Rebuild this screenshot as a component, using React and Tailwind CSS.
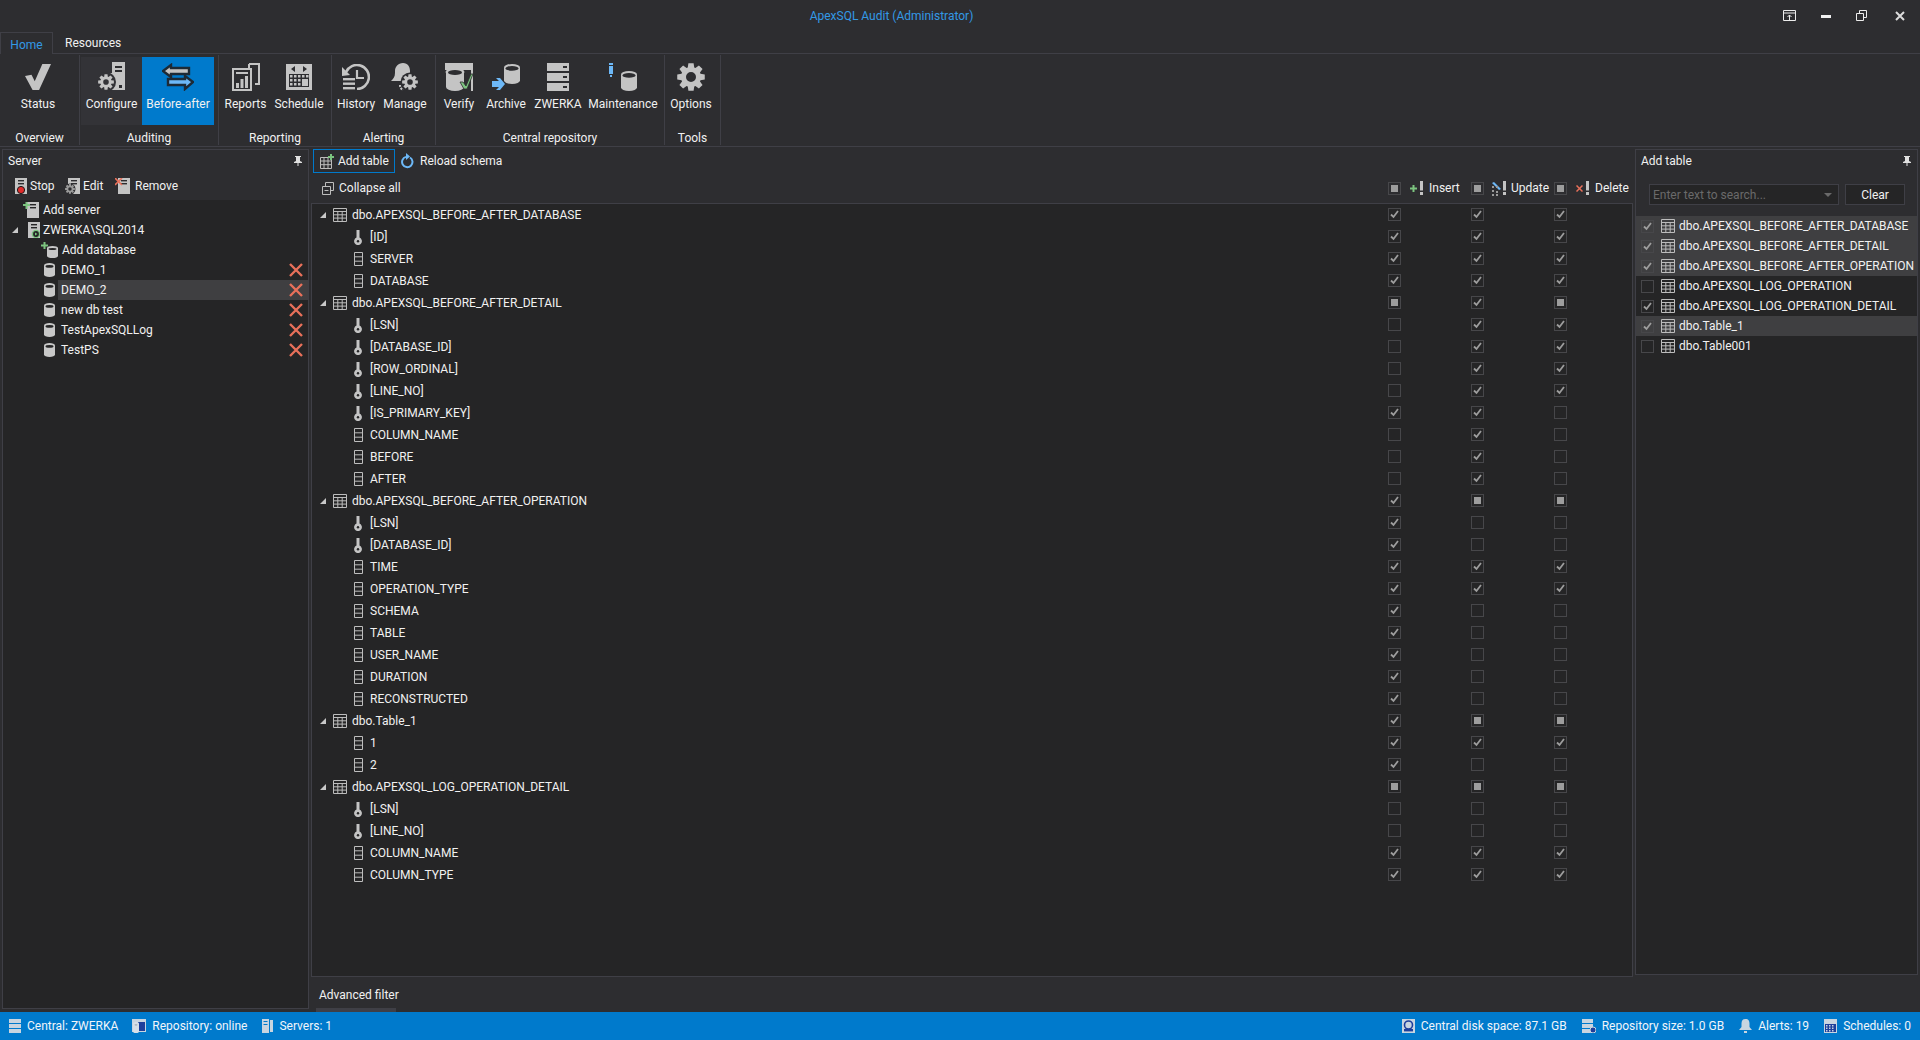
const G = "#c4c4c4";
const BLUE = "#6db8f7";
const GREEN = "#7cc47f";
const RED = "#e8705a";

function gearPath(c, ro, ri, hole, teeth = 8) {
  const pts = [];
  const step = (Math.PI * 2) / teeth;
  for (let i = 0; i < teeth; i++) {
    const a = i * step;
    [[-0.3, ri], [-0.17, ro], [0.17, ro], [0.3, ri]].forEach(([f, r]) => {
      pts.push(`${(c + r * Math.cos(a + f * step * 1.4)).toFixed(2)} ${(c + r * Math.sin(a + f * step * 1.4)).toFixed(2)}`);
    });
  }
  return `M${pts.join("L")}Z M${c - hole} ${c}a${hole} ${hole} 0 1 0 ${hole * 2} 0a${hole} ${hole} 0 1 0 ${-hole * 2} 0Z`;
}

function Gear({ size = 28, color = G }) {
  return (
    <svg width={size} height={size} viewBox="0 0 28 28">
      <path d={gearPath(14, 14, 10, 5)} fill={color} fillRule="evenodd" />
    </svg>
  );
}

function Cylinder({ x = 0, y = 0, w = 16, h = 20, fill = G, top = "#2d2d30" }) {
  const ry = h * 0.17;
  return (
    <g>
      <path d={`M${x} ${y + ry}a${w / 2} ${ry} 0 0 1 ${w} 0v${h - ry * 2}a${w / 2} ${ry} 0 0 1 ${-w} 0z`} fill={fill} />
      <ellipse cx={x + w / 2} cy={y + ry + 1} rx={w / 2 - 1.5} ry={ry - 1} fill={top} />
    </g>
  );
}

const Gear16 = ({ color = G }) => <path d={gearPath(8, 8, 5.6, 2.8)} fill={color} fillRule="evenodd" />;

/* ribbon icons */
const StatusIcon = () => (
  <svg width="26" height="26" viewBox="0 0 24 24"><path d="M0 11l6-1 3 6L16 0h8L13 24H7z" fill={G} /></svg>
);
const ConfigureIcon = () => (
  <svg width="30" height="30" viewBox="0 0 30 30">
    <path d="M15 0h13v28H11V11h4z" fill={G} />
    <rect x="18" y="4" width="7" height="2" fill="#2d2d30" /><rect x="18" y="8" width="7" height="2" fill="#2d2d30" />
    <rect x="22" y="23" width="3" height="3" fill="#2d2d30" />
    <circle cx="9" cy="20" r="10" fill="#333337" />
    <g transform="translate(1 12)"><Gear16 /></g>
  </svg>
);
const BeforeAfterIcon = () => (
  <svg width="32" height="28" viewBox="0 0 32 28">
    <path d="M9 2L1 8l8 6v-3h18V5H9z" fill="#c4c4c4" stroke="#1d2a36" strokeWidth="2.4" />
    <path d="M23 13l8 6-8 7v-4H6v-6h17z" fill={BLUE} stroke="#1d2a36" strokeWidth="2.4" />
  </svg>
);
const ReportsIcon = () => (
  <svg width="28" height="28" viewBox="0 0 28 28">
    <path d="M17 1h10v20h-4M17 1v4" fill="none" stroke={G} strokeWidth="2" />
    <rect x="1" y="6" width="18" height="21" fill="none" stroke={G} strokeWidth="2" />
    <rect x="4" y="9" width="12" height="2" fill={G} />
    <rect x="4" y="20" width="3" height="5" fill={G} /><rect x="8.5" y="16" width="3" height="9" fill={G} /><rect x="13" y="13" width="3" height="12" fill={G} />
  </svg>
);
const ScheduleIcon = () => (
  <svg width="26" height="26" viewBox="0 0 26 26">
    <rect width="26" height="26" fill={G} />
    <path d="M9 2v6L5 5zM17 2v6l4-3z" fill="#2d2d30" />
    <rect x="3" y="10" width="20" height="13" fill="#2d2d30" />
    {[11, 15, 19].map((y) => [4, 8, 12].map((x) => <rect key={x + "" + y} x={x} y={y} width="2.5" height="2.5" fill={G} />))}
    <rect x="16" y="15" width="6" height="7" fill={G} /><rect x="16" y="11" width="2.5" height="2.5" fill={G} /><rect x="20" y="11" width="2.5" height="2.5" fill={G} />
  </svg>
);
const HistoryIcon = () => (
  <svg width="28" height="26" viewBox="0 0 28 26">
    <path d="M4 8a12 12 0 1 1 11 17" fill="none" stroke={G} strokeWidth="2.6" />
    <path d="M0 3l8 8-8 1z" fill={G} />
    <path d="M15 6v8h7" fill="none" stroke={G} strokeWidth="2.2" />
    <rect x="1" y="14" width="12" height="2.4" fill={G} /><rect x="1" y="18.5" width="12" height="2.4" fill={G} /><rect x="1" y="23" width="12" height="2.4" fill={G} />
  </svg>
);
const ManageIcon = () => (
  <svg width="28" height="28" viewBox="0 0 28 28">
    <path d="M12 0c5 0 7 4 7 8v6l3 4H0c2-2 4-4 4-8V8c0-4 3-8 8-8z" fill={G} />
    <circle cx="19" cy="19" r="9.5" fill="#2d2d30" />
    <g transform="translate(11 11)"><Gear16 /></g>
    <path d="M9 22a8 6 0 0 0 3 5" fill="none" stroke={G} strokeWidth="2" strokeDasharray="2 1" />
  </svg>
);
const VerifyIcon = () => (
  <svg width="28" height="28" viewBox="0 0 28 28">
    <path d="M0 0h28v28h-2V7H0z" fill={G} />
    <path d="M1 8v16a9 4 0 0 0 18 0V8" fill={G} /><ellipse cx="10" cy="9" rx="9.5" ry="4" fill={G} />
    <ellipse cx="10" cy="9.5" rx="7" ry="2.6" fill="#2d2d30" />
    <path d="M15 19l3 0 3 4 5-12 2 0-6 15h-3z" fill={GREEN} stroke="#2d2d30" strokeWidth="0.8" />
  </svg>
);
const ArchiveIcon = () => (
  <svg width="29" height="27" viewBox="0 0 29 27">
    <Cylinder x={12} y={0} w={16} h={20} />
    <path d="M0 17h7l-3-3h4l5 6-5 6H4l3-3H0z" fill={BLUE} />
  </svg>
);
const ZwerkaIcon = () => (
  <svg width="22" height="28" viewBox="0 0 22 28">
    {[0, 10, 20].map((y) => (
      <g key={y}><rect y={y} width="22" height="8" fill={G} /><rect x="16" y={y + 3} width="4" height="2" fill="#2d2d30" /></g>
    ))}
  </svg>
);
const MaintenanceIcon = () => (
  <svg width="28" height="28" viewBox="0 0 28 28">
    <rect x="0" y="0" width="4" height="2" fill={BLUE} /><path d="M0 3h4v8H0zM1 12h2v2H1z" fill={BLUE} />
    <Cylinder x={12} y={8} w={16} h={20} />
  </svg>
);

/* small icons */
const ServerSmall = ({ children, w = 14, bg = "#2d2d30" }) => (
  <svg width={w} height="16" viewBox={`0 0 ${w} 16`} className="shrink-0">
    <path d={`M${w - 12} 0h12v16h-12z`} fill={G} />
    <rect x={w - 9} y="2" width="6" height="1.4" fill={bg} /><rect x={w - 9} y="5" width="6" height="1.4" fill={bg} />
    {children}
  </svg>
);
const DbIcon = () => (
  <svg width="11" height="14" viewBox="0 0 11 14" className="shrink-0"><Cylinder x={0} y={0} w={11} h={14} fill="#c8c8c8" top="#252526" /></svg>
);
const RedX = () => (
  <svg width="14" height="14" viewBox="0 0 14 14" className="shrink-0"><path d="M1 1l12 12M13 1L1 13" stroke={RED} strokeWidth="2.4" /></svg>
);
const Tri = () => (
  <svg width="6" height="6" viewBox="0 0 6 6" className="shrink-0"><path d="M6 0v6H0z" fill="#c8c8c8" /></svg>
);
const TableIcon = () => (
  <svg width="14" height="14" viewBox="0 0 14 14" className="shrink-0">
    <path d="M.5.5h13v13H.5zM.5 3.5h13M.5 6.8h13M.5 10.1h13M4.8 3.5v10M9.2 3.5v10" fill="none" stroke="#bdbdbd" />
  </svg>
);
const KeyIcon = () => (
  <svg width="8" height="15" viewBox="0 0 8 15" className="shrink-0">
    <path d="M2.500 0h3v7.600a3.900 3.900 0 1 1-3 0z" fill="#c4c4c4" /><circle cx="4" cy="11.2" r="1.2" fill="#252526" />
  </svg>
);
const ColumnIcon = () => (
  <svg width="9" height="14" viewBox="0 0 9 14" className="shrink-0"><path d="M.5.5h8v13h-8zM.5 4.800h8M.5 9.200h8" fill="none" stroke="#bdbdbd" /></svg>
);
const Bang = () => (
  <svg width="3" height="14" viewBox="0 0 3 14" className="shrink-0"><path d="M0 0h3v9.500H0zM0 11h3v3H0z" fill={G} /></svg>
);
const Pin = () => (
  <svg width="8" height="10" viewBox="0 0 8 10" className="shrink-0"><path d="M1 0h6v1H6v4l2 1v1H4.500v3h-1V7H0V6l2-1V1H1z" fill="#e0e0e0" /></svg>
);

function Checkbox({ state }) {
  return (
    <span className="w-[13px] h-[13px] border border-[#47474a] flex items-center justify-center shrink-0">
      {state === "c" && (
        <svg width="11" height="11" viewBox="0 0 11 11"><path d="M2 5.500l2.500 2.500L9 2" fill="none" stroke="#9d9d9d" strokeWidth="1.8" /></svg>
      )}
      {state === "i" && <span className="w-[7px] h-[7px] bg-[#9d9d9d]" />}
    </span>
  );
}

function RibbonBtn({ label, w, icon, cls = "" }) {
  return (
    <div className={`h-[68px] flex flex-col items-center pt-[5px] ${w} ${cls}`}>
      <div className="h-[30px] flex items-center justify-center">{icon}</div>
      <span className="mt-[4px] leading-4 whitespace-nowrap">{label}</span>
    </div>
  );
}

function RibbonGroup({ label, w, children }) {
  return (
    <div className={`h-[90px] border-r border-[#3f3f46] flex flex-col ${w}`}>
      <div className="h-[68px] mt-[2px] flex">{children}</div>
      <div className="mt-[4px] h-4 leading-4 text-center pt-px">{label}</div>
    </div>
  );
}

const columns = [
  ["t", "dbo.APEXSQL_BEFORE_AFTER_DATABASE", "ccc"],
  ["k", "[ID]", "ccc"],
  ["c", "SERVER", "ccc"],
  ["c", "DATABASE", "ccc"],
  ["t", "dbo.APEXSQL_BEFORE_AFTER_DETAIL", "ici"],
  ["k", "[LSN]", "ecc"],
  ["k", "[DATABASE_ID]", "ecc"],
  ["k", "[ROW_ORDINAL]", "ecc"],
  ["k", "[LINE_NO]", "ecc"],
  ["k", "[IS_PRIMARY_KEY]", "cce"],
  ["c", "COLUMN_NAME", "ece"],
  ["c", "BEFORE", "ece"],
  ["c", "AFTER", "ece"],
  ["t", "dbo.APEXSQL_BEFORE_AFTER_OPERATION", "cii"],
  ["k", "[LSN]", "cee"],
  ["k", "[DATABASE_ID]", "cee"],
  ["c", "TIME", "ccc"],
  ["c", "OPERATION_TYPE", "ccc"],
  ["c", "SCHEMA", "cee"],
  ["c", "TABLE", "cee"],
  ["c", "USER_NAME", "cee"],
  ["c", "DURATION", "cee"],
  ["c", "RECONSTRUCTED", "cee"],
  ["t", "dbo.Table_1", "cii"],
  ["c", "1", "ccc"],
  ["c", "2", "cee"],
  ["t", "dbo.APEXSQL_LOG_OPERATION_DETAIL", "iii"],
  ["k", "[LSN]", "eee"],
  ["k", "[LINE_NO]", "eee"],
  ["c", "COLUMN_NAME", "ccc"],
  ["c", "COLUMN_TYPE", "ccc"],
];

const tables = [
  ["dbo.APEXSQL_BEFORE_AFTER_DATABASE", true, true],
  ["dbo.APEXSQL_BEFORE_AFTER_DETAIL", true, true],
  ["dbo.APEXSQL_BEFORE_AFTER_OPERATION", true, true],
  ["dbo.APEXSQL_LOG_OPERATION", false, false],
  ["dbo.APEXSQL_LOG_OPERATION_DETAIL", true, false],
  ["dbo.Table_1", true, true],
  ["dbo.Table001", false, false],
];

const databases = ["DEMO_1", "DEMO_2", "new db test", "TestApexSQLLog", "TestPS"];

function GridRow({ kind, name, states }) {
  return (
    <div className="h-[22px] flex items-center">
      <div className="w-[1076px] flex items-center shrink-0">
        {kind === "t" ? (
          <div className="flex items-center pl-[8px]">
            <span className="w-[13px]"><Tri /></span>
            <TableIcon />
            <span className="ml-[5px]">{name}</span>
          </div>
        ) : (
          <div className="flex items-center pl-[41px]">
            <span className="w-[10px] flex justify-center">{kind === "k" ? <KeyIcon /> : <ColumnIcon />}</span>
            <span className="ml-[7px]">{name}</span>
          </div>
        )}
      </div>
      {states.split("").map((s, i) => (
        <div key={i} className="w-[83px] shrink-0 -mt-px"><Checkbox state={s} /></div>
      ))}
    </div>
  );
}

function StatusItem({ icon, label, cls = "" }) {
  return (
    <div className={`flex items-center ${cls}`}>
      {icon}
      <span className="ml-[6px] whitespace-nowrap">{label}</span>
    </div>
  );
}

export default function App() {
  return (
    <div className="w-[1920px] h-[1040px] overflow-hidden bg-[#2d2d30] text-[#f1f1f1] text-[12px] font-['Roboto',sans-serif] flex flex-col">
      {/* Title bar */}
      <div className="h-[32px] flex items-center shrink-0">
        <div className="w-[1783px] text-center text-[#3399e6]">ApexSQL Audit (Administrator)</div>
        <svg width="14" height="12" viewBox="0 0 14 12" className="-mt-px"><path d="M.5.5h12v10H.5zM.5 3h12M6.500 10V5M4.500 7l2-2 2 2" fill="none" stroke="#ececec" /></svg>
        <div className="ml-[24px] w-[10px] h-[3px] bg-[#f0f0f0]" />
        <svg width="11" height="11" viewBox="0 0 11 11" className="ml-[25px] -mt-px"><path d="M.5 3.500h7v7h-7zM3.500 3V.5h7v7H8" fill="none" stroke="#ececec" /></svg>
        <svg width="10" height="10" viewBox="0 0 10 10" className="ml-[28px] -mt-px"><path d="M1 1l8 8M9 1L1 9" stroke="#dcdcdc" strokeWidth="2" /></svg>
      </div>

      {/* Tabs */}
      <div className="h-[22px] flex items-end border-b border-[#3f3f46] shrink-0">
        <div className="w-[53px] h-[22px] -mb-px border border-b-0 border-[#3f3f46] bg-[#2d2d30] text-[#3399e6] flex items-center justify-center pt-[2px]">Home</div>
        <div className="ml-[12px] h-[21px] flex items-center pt-px">Resources</div>
      </div>

      {/* Ribbon */}
      <div className="h-[93px] pt-px border-b border-[#3f3f46] flex shrink-0">
        <RibbonGroup label="Overview" w="w-[80px]">
          <RibbonBtn label="Status" w="w-[62px]" cls="ml-[7px]" icon={<StatusIcon />} />
        </RibbonGroup>
        <RibbonGroup label="Auditing" w="w-[139px]">
          <RibbonBtn label="Configure" w="w-[61px]" cls="ml-px bg-[#333337]" icon={<ConfigureIcon />} />
          <RibbonBtn label="Before-after" w="w-[72px]" cls="bg-[#007acc]" icon={<BeforeAfterIcon />} />
        </RibbonGroup>
        <RibbonGroup label="Reporting" w="w-[113px]">
          <RibbonBtn label="Reports" w="w-[53px]" icon={<ReportsIcon />} />
          <RibbonBtn label="Schedule" w="w-[54px]" icon={<ScheduleIcon />} />
        </RibbonGroup>
        <RibbonGroup label="Alerting" w="w-[104px]">
          <RibbonBtn label="History" w="w-[48px]" icon={<HistoryIcon />} />
          <RibbonBtn label="Manage" w="w-[50px]" icon={<ManageIcon />} />
        </RibbonGroup>
        <RibbonGroup label="Central repository" w="w-[229px]">
          <RibbonBtn label="Verify" w="w-[46px]" icon={<VerifyIcon />} />
          <RibbonBtn label="Archive" w="w-[48px]" icon={<ArchiveIcon />} />
          <RibbonBtn label="ZWERKA" w="w-[56px]" icon={<ZwerkaIcon />} />
          <RibbonBtn label="Maintenance" w="w-[74px]" icon={<MaintenanceIcon />} />
        </RibbonGroup>
        <RibbonGroup label="Tools" w="w-[56px]">
          <RibbonBtn label="Options" w="w-[52px]" icon={<Gear />} />
        </RibbonGroup>
      </div>

      {/* Main */}
      <div className="flex-1 min-h-0 flex pt-[2px]">
        {/* Server panel */}
        <div className="w-[307px] ml-[2px] mb-[3px] border border-[#3f3f46] flex flex-col shrink-0">
          <div className="h-[21px] flex items-center justify-between pl-[5px] pr-[6px]">
            <span>Server</span>
            <Pin />
          </div>
          <div className="h-[29px] flex items-center">
            <div className="ml-[10px] flex items-center w-[50px]">
              <ServerSmall><circle cx="8" cy="12" r="3.6" fill="#e02c2c" stroke="#1a1a1a" /></ServerSmall>
              <span className="ml-[3px]">Stop</span>
            </div>
            <div className="ml-[1px] flex items-center w-[50px]">
              <ServerSmall w={16}><circle cx="6" cy="11" r="5.5" fill="#2d2d30" /><g transform="translate(1 6) scale(.62)"><Gear16 color="#9a9a9a" /></g></ServerSmall>
              <span className="ml-[3px]">Edit</span>
            </div>
            <div className="flex items-center ml-[1px]">
              <ServerSmall w={15}><path d="M0 0l7 7M7 0L0 7" stroke={RED} strokeWidth="1.6" /></ServerSmall>
              <span className="ml-[5px]">Remove</span>
            </div>
          </div>
          <div className="flex-1 bg-[#252526]">
            <div className="h-5 flex items-center pl-[20px]">
              <ServerSmall w={16} bg="#252526"><path d="M0 3h7M3.500 0v7" stroke={GREEN} strokeWidth="2" /></ServerSmall>
              <span className="ml-[4px]">Add server</span>
            </div>
            <div className="h-5 flex items-center pl-[9px]">
              <span className="w-[14px]"><Tri /></span>
              <ServerSmall bg="#252526"><circle cx="10" cy="12" r="3.6" fill="#252526" stroke={GREEN} strokeWidth="1.4" /><path d="M9 10.500v3l2.500-1.500z" fill={GREEN} /></ServerSmall>
              <span className="ml-[3px]">ZWERKA\SQL2014</span>
            </div>
            <div className="h-5 flex items-center pl-[38px]">
              <svg width="18" height="16" viewBox="0 0 18 16" className="shrink-0">
                <path d="M0 3.500h7M3.500 0v7" stroke={GREEN} strokeWidth="2" />
                <Cylinder x={6} y={4} w={11} h={12} fill="#c8c8c8" top="#252526" />
              </svg>
              <span className="ml-[3px]">Add database</span>
            </div>
            {databases.map((db) => (
              <div key={db} className="h-5 flex items-center pl-[41px]">
                <DbIcon />
                <div className={`flex-1 h-5 ml-[3px] pl-[3px] pr-[5px] flex items-center justify-between ${db === "DEMO_2" ? "bg-[#3f3f41]" : ""}`}>
                  <span>{db}</span>
                  <RedX />
                </div>
              </div>
            ))}
          </div>
        </div>

        {/* Center */}
        <div className="w-[1322px] ml-[2px] flex flex-col shrink-0">
          <div className="h-[24px] flex items-center">
            <div className="ml-[2px] h-[24px] w-[82px] border border-[#007acc] flex items-center pl-[6px]">
              <svg width="14" height="15" viewBox="0 0 14 15" className="shrink-0">
                <path d="M.5 3.500h11v11H.5zM.5 7h11M.5 10.700h11M4 3.500v11M8 3.500v11" fill="none" stroke="#bdbdbd" />
                <path d="M8 3h6M11 0v6" stroke={GREEN} strokeWidth="2" />
              </svg>
              <span className="ml-[4px]">Add table</span>
            </div>
            <svg width="13" height="16" viewBox="0 0 13 16" className="ml-[6px] shrink-0"><path d="M9 4.500a5.200 5.200 0 1 1-4-.6" fill="none" stroke={BLUE} strokeWidth="2" /><path d="M5 0l4 3.500L5 7z" fill={BLUE} /></svg>
            <span className="ml-[6px]">Reload schema</span>
          </div>
          <div className="h-[30px] flex items-center">
            <div className="w-[1077px] flex items-center pl-[11px] shrink-0">
              <svg width="12" height="13" viewBox="0 0 12 13" className="shrink-0"><path d="M.5 4.500h8v8h-8zM3.500 4V.5h8v8H9M2.500 8.500h4" fill="none" stroke="#bdbdbd" /></svg>
              <span className="ml-[5px]">Collapse all</span>
            </div>
            <div className="w-[83px] flex items-center shrink-0">
              <Checkbox state="i" />
              <svg width="7" height="7" viewBox="0 0 7 7" className="ml-[9px] shrink-0"><path d="M0 3.500h7M3.500 0v7" stroke={GREEN} strokeWidth="2" /></svg>
              <span className="ml-[3px]"><Bang /></span>
              <span className="ml-[6px]">Insert</span>
            </div>
            <div className="w-[83px] flex items-center shrink-0">
              <Checkbox state="i" />
              <svg width="11" height="15" viewBox="0 0 11 15" className="ml-[7px] shrink-0">
                <path d="M3 1l7 7-2 1-7-7z" fill={BLUE} />
                {[[1, 5], [5, 5], [1, 9], [5, 10], [1, 13], [5, 13]].map(([x, y]) => <rect key={x + "-" + y} x={x} y={y} width="2" height="2" fill="#9a9a9a" />)}
              </svg>
              <span className="ml-[1px]"><Bang /></span>
              <span className="ml-[5px]">Update</span>
            </div>
            <div className="w-[79px] flex items-center shrink-0">
              <Checkbox state="i" />
              <svg width="7" height="7" viewBox="0 0 7 7" className="ml-[9px] shrink-0"><path d="M.5.5l6 6M6.500.5l-6 6" stroke={RED} strokeWidth="1.5" /></svg>
              <span className="ml-[3px]"><Bang /></span>
              <span className="ml-[6px]">Delete</span>
            </div>
          </div>
          <div className="h-[774px] border border-[#3f3f46] bg-[#252526] overflow-hidden">
            {columns.map(([kind, name, states], i) => (
              <GridRow key={i} kind={kind} name={name} states={states} />
            ))}
          </div>
          <div className="flex-1 flex flex-col pl-[5px]">
            <div className="flex-1 flex items-center pl-[3px] pt-[5px]">Advanced filter</div>
            <div className="w-[80px] h-[4px] bg-[#3f3f46]" />
          </div>
        </div>

        {/* Add table panel */}
        <div className="w-[283px] ml-[2px] mb-[37px] border border-[#3f3f46] flex flex-col shrink-0">
          <div className="h-[21px] flex items-center justify-between pl-[5px] pr-[6px]">
            <span>Add table</span>
            <Pin />
          </div>
          <div className="h-[45px] pt-[13px] pl-[13px] flex">
            <div className="w-[190px] h-[21px] border border-[#3f3f46] bg-[#252526] flex items-center justify-between pl-[3px] pr-[6px] text-[#6a6a6a]">
              <span>Enter text to search...</span>
              <svg width="8" height="4" viewBox="0 0 8 4"><path d="M0 0h8L4 4z" fill="#6a6a6a" /></svg>
            </div>
            <div className="ml-[6px] w-[60px] h-[21px] border border-[#3f3f46] bg-[#252526] flex items-center justify-center">Clear</div>
          </div>
          <div className="flex-1 bg-[#252526]">
            {tables.map(([name, checked, selected]) => (
              <div key={name} className={`h-5 flex items-center pl-[5px] ${selected ? "bg-[#3f3f41]" : ""}`}>
                <Checkbox state={checked ? "c" : "e"} />
                <span className="ml-[7px]"><TableIcon /></span>
                <span className="ml-[4px]">{name}</span>
              </div>
            ))}
          </div>
        </div>
      </div>

      {/* Status bar */}
      <div className="h-[28px] bg-[#007acc] flex items-center shrink-0 text-[#f1f5fa]">
        <StatusItem cls="ml-[9px]" label="Central: ZWERKA" icon={
          <svg width="12" height="14" viewBox="0 0 12 14" className="shrink-0">{[0, 5, 10].map((y) => <rect key={y} y={y} width="12" height="4" fill="#c9d5e0" />)}</svg>
        } />
        <StatusItem cls="ml-[14px]" label="Repository: online" icon={
          <svg width="14" height="14" viewBox="0 0 14 14" className="shrink-0"><rect width="14" height="13" fill="#c9d5e0" /><rect x="6" y="3" width="7" height="9" fill="#1e3f9c" /><Cylinder x={1} y={3} w={6} h={11} fill="#d8e0e8" top="#a9b5c0" /></svg>
        } />
        <StatusItem cls="ml-[15px]" label="Servers: 1" icon={
          <svg width="11" height="14" viewBox="0 0 11 14" className="shrink-0"><rect width="7" height="14" fill="#c9d5e0" /><rect x="8" y="1" width="3" height="12" fill="#c9d5e0" /><rect x="1.500" y="2" width="4" height="1" fill="#007acc" /><rect x="1.500" y="5" width="4" height="1" fill="#007acc" /></svg>
        } />
        <div className="flex-1" />
        <StatusItem label="Central disk space: 87.1 GB" icon={
          <svg width="13" height="14" viewBox="0 0 13 14" className="shrink-0"><rect width="13" height="14" fill="#c9d5e0" /><circle cx="6.500" cy="6" r="4" fill="none" stroke="#1e3f9c" strokeWidth="1.6" /><rect x="2" y="10" width="9" height="2.400" fill="#1e3f9c" /></svg>
        } />
        <StatusItem cls="ml-[15px]" label="Repository size: 1.0 GB" icon={
          <svg width="14" height="14" viewBox="0 0 14 14" className="shrink-0">{[0, 5, 10].map((y) => <rect key={y} y={y} width="11" height="4" fill="#c9d5e0" />)}<circle cx="11" cy="11" r="3" fill="#1e3f9c" stroke="#c9d5e0" /></svg>
        } />
        <StatusItem cls="ml-[15px]" label="Alerts: 19" icon={
          <svg width="13" height="14" viewBox="0 0 13 14" className="shrink-0"><path d="M6.500 0c3 0 4 2 4 4.500V8l2.500 3H0l2.500-3V4.500C2.500 2 3.500 0 6.500 0z" fill="#c9d5e0" /><rect x="5" y="12" width="3" height="2" fill="#c9d5e0" /></svg>
        } />
        <StatusItem cls="ml-[15px] mr-[9px]" label="Schedules: 0" icon={
          <svg width="13" height="14" viewBox="0 0 13 14" className="shrink-0"><rect width="13" height="14" fill="#c9d5e0" /><rect x="1" y="5" width="11" height="8" fill="#1e3f9c" />{[6, 8.500, 11].map((y) => [2, 5, 8].map((x) => <rect key={x + "" + y} x={x} y={y} width="1.500" height="1.500" fill="#c9d5e0" />))}</svg>
        } />
      </div>
    </div>
  );
}
